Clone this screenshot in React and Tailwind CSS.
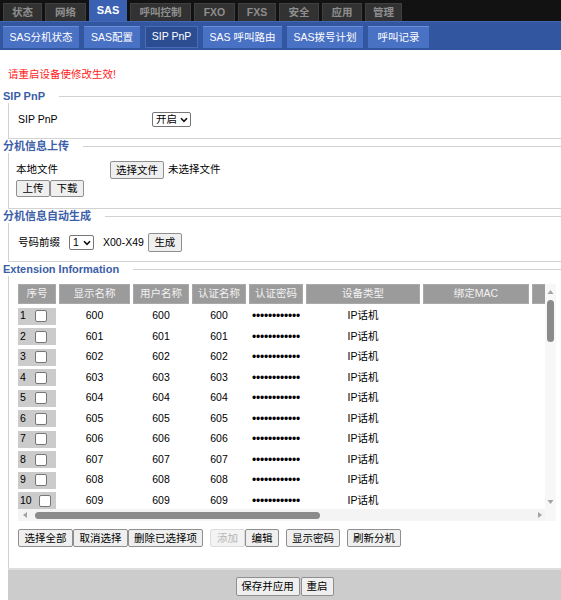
import React from "react";

const topTabs = [
  { label: "状态", w: "w-[39px]" },
  { label: "网络", w: "w-[41px]" },
  { label: "SAS", w: "w-[38px]", active: true },
  { label: "呼叫控制", w: "w-[61px]" },
  { label: "FXO", w: "w-[41px]" },
  { label: "FXS", w: "w-[38px]" },
  { label: "安全", w: "w-[40px]" },
  { label: "应用", w: "w-[40px]" },
  { label: "管理", w: "w-[37px]" },
];

const subTabs = [
  { label: "SAS分机状态", w: "w-[76px]" },
  { label: "SAS配置", w: "w-[56px]" },
  { label: "SIP PnP", w: "w-[53px]", active: true },
  { label: "SAS 呼叫路由", w: "w-[79px]" },
  { label: "SAS拨号计划", w: "w-[76px]" },
  { label: "呼叫记录", w: "w-[61px]" },
];

const headers = [
  { label: "序号", w: "w-[38px]" },
  { label: "显示名称", w: "w-[71px]" },
  { label: "用户名称", w: "w-[56px]" },
  { label: "认证名称", w: "w-[54px]" },
  { label: "认证密码", w: "w-[54px]" },
  { label: "设备类型", w: "w-[114px]" },
  { label: "绑定MAC", w: "w-[106px]" },
  { label: "", w: "w-[40px]" },
];

const rows = Array.from({ length: 10 }, (_, i) => ({
  idx: i + 1,
  name: String(600 + i),
}));

const Legend = ({ children }) => (
  <div className="flex items-center h-[14px]">
    <span className="pl-[3px] pr-[14px] text-[11px] font-bold text-[#3b5ea8] leading-none whitespace-nowrap">
      {children}
    </span>
    <div className="flex-1 h-px bg-[#d2d2d2]" />
  </div>
);

const Btn = ({ children, w, h = "h-[18px]", disabled }) => (
  <button
    className={
      disabled
        ? `${w} ${h} flex items-center justify-center border border-[#dcdcdc] rounded-[2px] bg-[#f3f3f3] text-[10.5px] text-[#b5b5b5] leading-none`
        : `${w} ${h} flex items-center justify-center border border-[#8f8f8f] rounded-[2px] bg-[#efefef] text-[10.5px] text-black leading-none`
    }
  >
    {children}
  </button>
);

const FakeSelect = ({ value, w }) => (
  <div
    className={`${w} h-[15px] flex items-center justify-between pl-[3px] pr-[2px] border border-[#767676] rounded-[2px] bg-white text-[10.5px] leading-none`}
  >
    <span>{value}</span>
    <svg width="8" height="6" viewBox="0 0 8 6">
      <path d="M1 1.2 L4 4.4 L7 1.2" fill="none" stroke="#111" strokeWidth="1.6" />
    </svg>
  </div>
);

const Checkbox = () => (
  <div className="w-[12px] h-[12px] border border-[#767676] rounded-[2px] bg-white" />
);

export default function App() {
  return (
    <div className="w-[561px] min-h-[600px] bg-white text-black font-['Liberation_Sans','Noto_Sans_CJK_SC',sans-serif] overflow-hidden">
      {/* top nav */}
      <div className="h-[21px] bg-[#121212] flex items-end gap-[3px] pl-[3px]">
        {topTabs.map((t) =>
          t.active ? (
            <div
              key={t.label}
              className={`${t.w} h-[21px] flex items-center justify-center bg-[#3a61b2] text-white text-[11px] font-bold`}
            >
              {t.label}
            </div>
          ) : (
            <div
              key={t.label}
              className={`${t.w} h-[18px] flex items-center justify-center bg-[#323232] border-t border-x border-[#3f3f3f] text-[#8e8e8e] text-[10.5px] font-bold`}
            >
              {t.label}
            </div>
          )
        )}
      </div>

      {/* sub nav */}
      <div className="h-[29px] bg-[#3356a1] border-t border-[#4268b5] flex items-start gap-[5px] pl-[3px] pt-[4px]">
        {subTabs.map((t) => (
          <div
            key={t.label}
            className={
              t.active
                ? `${t.w} h-[22px] flex items-center justify-center bg-[#2c4d92] border border-[#4a6cb8] text-white text-[10.5px]`
                : `${t.w} h-[22px] flex items-center justify-center bg-[#4a72c4] border-t border-[#6b8dd6] text-white text-[10.5px]`
            }
          >
            {t.label}
          </div>
        ))}
      </div>

      {/* notice */}
      <div className="pt-[17px] pl-[8px]">
        <div className="text-[10.5px] leading-[14px] text-[#ff1a1a]">请重启设备使修改生效!</div>
      </div>

      <div className="mt-[8px]">
        {/* SIP PnP */}
        <Legend>SIP PnP</Legend>
        <div className="ml-[8px] border-l border-b border-[#d2d2d2] pl-[9px] pt-[9px] pb-[11px]">
          <div className="flex items-center h-[15px] text-[10.5px]">
            <span className="w-[134px]">SIP PnP</span>
            <FakeSelect value="开启" w="w-[39px]" />
          </div>
        </div>

        {/* 分机信息上传 */}
        <Legend>分机信息上传</Legend>
        <div className="ml-[8px] border-l border-b border-[#d2d2d2] pl-[7px] pt-[8px] pb-[11px]">
          <div className="flex items-center h-[18px] text-[10.5px]">
            <span className="w-[94px]">本地文件</span>
            <Btn w="w-[54px]">选择文件</Btn>
            <span className="ml-[4px]">未选择文件</span>
          </div>
          <div className="flex mt-[1px]">
            <Btn w="w-[34px]" h="h-[17px]">上传</Btn>
            <Btn w="w-[34px]" h="h-[17px]">下载</Btn>
          </div>
        </div>

        {/* 分机信息自动生成 */}
        <Legend>分机信息自动生成</Legend>
        <div className="ml-[8px] border-l border-b border-[#d2d2d2] pl-[9px] pt-[10px] pb-[9px]">
          <div className="flex items-center h-[19px] text-[10.5px]">
            <span className="w-[51px]">号码前缀</span>
            <FakeSelect value="1" w="w-[25px]" />
            <span className="ml-[9px] mr-[4px] whitespace-nowrap">X00-X49</span>
            <Btn w="w-[34px]" h="h-[19px]">生成</Btn>
          </div>
        </div>

        {/* Extension Information */}
        <Legend>Extension Information</Legend>
        <div className="ml-[8px] border-l border-[#d2d2d2] pl-[9px] pt-[8px] pb-[21px]">
          <div className="w-[538px] h-[237px] flex">
            <div className="w-[527px] flex flex-col">
              <div className="h-[225px] overflow-hidden">
                <div className="flex gap-[3px] h-[20px] mb-[2px] w-[560px]">
                  {headers.map((h, i) => (
                    <div
                      key={i}
                      className={`${h.w} shrink-0 h-[20px] flex items-center justify-center bg-[#9b9b9b] border border-[#a9a9a9] text-[#f2f2f2] text-[10.5px]`}
                    >
                      {h.label}
                    </div>
                  ))}
                </div>
                {rows.map((r) => (
                  <div key={r.idx} className="flex gap-[3px] h-[20.5px] items-center w-[560px] text-[10.5px]">
                    <div className="w-[38px] shrink-0 h-[17px] bg-[#cbcbcb] flex items-center pl-[2px]">
                      <span className={r.idx === 10 ? "w-[19px]" : "w-[15px]"}>{r.idx}</span>
                      <Checkbox />
                    </div>
                    <div className="w-[71px] shrink-0 text-center">{r.name}</div>
                    <div className="w-[56px] shrink-0 text-center">{r.name}</div>
                    <div className="w-[54px] shrink-0 text-center">{r.name}</div>
                    <div className="w-[54px] shrink-0 text-center text-[12px] leading-none tracking-[-0.2px]">
                      ••••••••••••
                    </div>
                    <div className="w-[114px] shrink-0 text-center">IP话机</div>
                    <div className="w-[106px] shrink-0" />
                    <div className="w-[40px] shrink-0" />
                  </div>
                ))}
              </div>
              {/* horizontal scrollbar */}
              <div className="h-[12px] bg-[#f4f4f4] flex items-center">
                <svg width="17" height="12" viewBox="0 0 17 12" className="shrink-0">
                  <path d="M5 6 L9 3 L9 9 Z" fill="#a3a3a3" />
                </svg>
                <div className="w-[285px] h-[7px] rounded-full bg-[#8b8b8b]" />
                <div className="flex-1" />
                <svg width="16" height="12" viewBox="0 0 16 12" className="shrink-0">
                  <path d="M13 6 L9 3 L9 9 Z" fill="#a3a3a3" />
                </svg>
              </div>
            </div>
            {/* vertical scrollbar */}
            <div className="w-[11px] flex flex-col items-center bg-[#f7f7f7]">
              <svg width="11" height="16" viewBox="0 0 11 16" className="shrink-0">
                <path d="M5.5 6 L2.5 10 L8.5 10 Z" fill="#a3a3a3" />
              </svg>
              <div className="w-[7px] h-[42px] rounded-full bg-[#8b8b8b]" />
              <div className="flex-1" />
              <svg width="11" height="16" viewBox="0 0 11 16" className="shrink-0">
                <path d="M5.5 11 L2.5 7 L8.5 7 Z" fill="#a3a3a3" />
              </svg>
              <div className="h-[12px]" />
            </div>
          </div>

          <div className="flex items-center mt-[8px]">
            <Btn w="w-[55px]">选择全部</Btn>
            <Btn w="w-[55px]">取消选择</Btn>
            <Btn w="w-[75px]">删除已选择项</Btn>
            <div className="w-[7px]" />
            <Btn w="w-[35px]" disabled>添加</Btn>
            <Btn w="w-[34px]">编辑</Btn>
            <div className="w-[7px]" />
            <Btn w="w-[54px]">显示密码</Btn>
            <div className="w-[7px]" />
            <Btn w="w-[54px]">刷新分机</Btn>
          </div>
        </div>

        {/* footer */}
        <div className="ml-[8px] h-[40px] bg-[#cccccc] border-t-2 border-[#dedede] pt-[7px] flex justify-center">
          <div className="flex gap-[1px]">
            <Btn w="w-[64px]" h="h-[19px]">保存并应用</Btn>
            <Btn w="w-[33px]" h="h-[19px]">重启</Btn>
          </div>
        </div>
      </div>
    </div>
  );
}
